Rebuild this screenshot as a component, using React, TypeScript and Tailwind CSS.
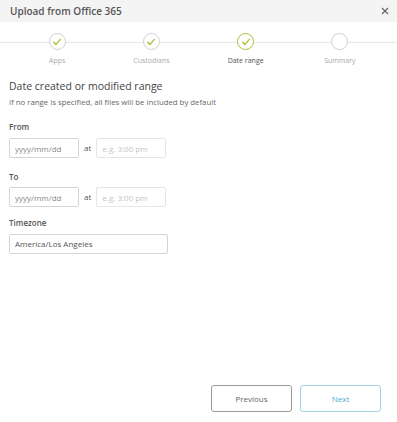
import React from "react";

const steps = [
  { label: "Apps", state: "done" },
  { label: "Custodians", state: "done" },
  { label: "Date range", state: "current" },
  { label: "Summary", state: "todo" },
];

function Check({ color }: { color: string }) {
  return (
    <svg width="10" height="10" viewBox="0 0 10 10" fill="none">
      <path d="M1.8 5.2 L4 7.4 L8.4 2.4" stroke={color} strokeWidth="1.4" strokeLinecap="round" strokeLinejoin="round" />
    </svg>
  );
}

function DateTimeRow({ top }: { top: string }) {
  return (
    <div className={`flex items-center ${top}`}>
      <input
        placeholder="yyyy/mm/dd"
        className="w-[70px] h-[20px] rounded-[2px] border border-[#d4d4d4] px-[5px] text-[8px] text-[#444] placeholder:text-[#888] outline-none"
      />
      <span className="mx-[5px] text-[8px] text-[#555]">at</span>
      <input
        placeholder="e.g. 3:00 pm"
        className="w-[70px] h-[20px] rounded-[2px] border border-[#e6e6e6] px-[5px] text-[8px] placeholder:text-[#c4c4c4] outline-none"
      />
    </div>
  );
}

export default function App() {
  return (
    <div className="w-[397px] h-[422px] bg-white flex flex-col font-['Open_Sans',sans-serif] text-[#444]">
      <div className="h-[22px] bg-[#f4f4f4] flex items-center justify-between pl-[10px] pr-[8px]">
        <span className="text-[10px] font-semibold text-[#555]">Upload from Office 365</span>
        <svg width="8" height="8" viewBox="0 0 8 8">
          <path d="M1 1 L7 7 M7 1 L1 7" stroke="#666" strokeWidth="1.2" />
        </svg>
      </div>

      <div className="relative mt-[11px] px-[10px]">
        <div className="absolute left-0 right-0 top-[9px] h-px bg-[#e8e8e8]" />
        <div className="relative grid grid-cols-4">
          {steps.map((s) => (
            <div key={s.label} className="flex flex-col items-center">
              <div
                className={
                  s.state === "current"
                    ? "w-[17px] h-[17px] rounded-full border-[1.5px] border-[#a4c23a] bg-white flex items-center justify-center"
                    : "w-[17px] h-[17px] rounded-full border border-[#d0d0d0] bg-white flex items-center justify-center"
                }
              >
                {s.state !== "todo" && <Check color="#a4c23a" />}
              </div>
              <span
                className={
                  s.state === "current"
                    ? "mt-[6px] text-[7px] text-[#555]"
                    : "mt-[6px] text-[7px] text-[#aaa]"
                }
              >
                {s.label}
              </span>
            </div>
          ))}
        </div>
      </div>

      <div className="px-[9px] mt-[12px]">
        <div className="text-[10.5px] text-[#444] leading-[14px]">Date created or modified range</div>
        <div className="mt-[4px] text-[7.8px] text-[#666]">If no range is specified, all files will be included by default</div>

        <div className="mt-[13px] text-[8px] font-semibold text-[#555]">From</div>
        <DateTimeRow top="mt-[5px]" />

        <div className="mt-[13px] text-[8px] font-semibold text-[#555]">To</div>
        <DateTimeRow top="mt-[4px]" />

        <div className="mt-[10px] text-[8px] font-semibold text-[#555]">Timezone</div>
        <input
          defaultValue="America/Los Angeles"
          className="mt-[3px] w-[159px] h-[20px] rounded-[2px] border border-[#d4d4d4] px-[5px] text-[8px] text-[#555] outline-none"
        />
      </div>

      <div className="mt-auto mb-[10px] flex justify-end gap-[8px] pr-[16px]">
        <button className="w-[81px] h-[27px] rounded-[3px] border border-[#999] text-[8px] text-[#666]">Previous</button>
        <button className="w-[81px] h-[27px] rounded-[3px] border border-[#9fd4e6] text-[8px] text-[#45aed2]">Next</button>
      </div>
    </div>
  );
}
